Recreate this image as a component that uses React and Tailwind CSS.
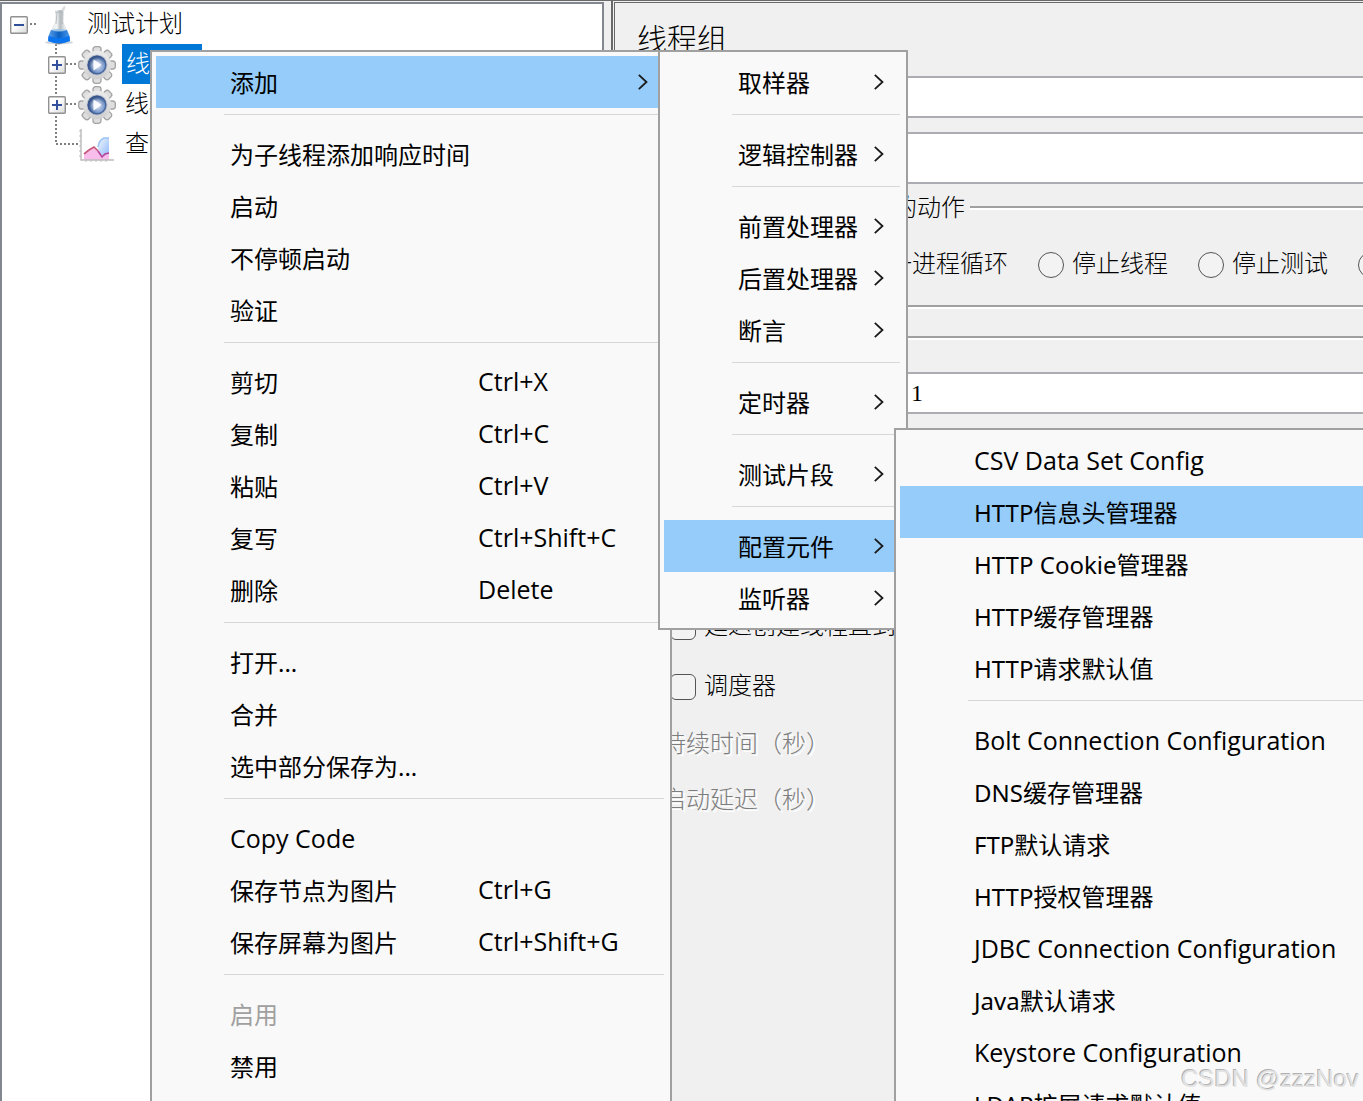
const threadMenu = [
  { label: '添加', submenu: true, active: true },
  null,
  { label: '为子线程添加响应时间' },
  { label: '启动' },
  { label: '不停顿启动' },
  { label: '验证' },
  null,
  { label: '剪切', shortcut: 'Ctrl+X' },
  { label: '复制', shortcut: 'Ctrl+C' },
  { label: '粘贴', shortcut: 'Ctrl+V' },
  { label: '复写', shortcut: 'Ctrl+Shift+C' },
  { label: '删除', shortcut: 'Delete' },
  null,
  { label: '打开...' },
  { label: '合并' },
  { label: '选中部分保存为...' },
  null,
  { label: 'Copy Code', latin: true },
  { label: '保存节点为图片', shortcut: 'Ctrl+G' },
  { label: '保存屏幕为图片', shortcut: 'Ctrl+Shift+G' },
  null,
  { label: '启用', disabled: true },
  { label: '禁用' },
];

const addMenu = [
  { label: '取样器', submenu: true },
  null,
  { label: '逻辑控制器', submenu: true },
  null,
  { label: '前置处理器', submenu: true },
  { label: '后置处理器', submenu: true },
  { label: '断言', submenu: true },
  null,
  { label: '定时器', submenu: true },
  null,
  { label: '测试片段', submenu: true },
  null,
  { label: '配置元件', submenu: true, active: true },
  { label: '监听器', submenu: true },
];

const configMenu = [
  { label: 'CSV Data Set Config', latin: true },
  { label: 'HTTP信息头管理器', active: true },
  { label: 'HTTP Cookie管理器' },
  { label: 'HTTP缓存管理器' },
  { label: 'HTTP请求默认值' },
  null,
  { label: 'Bolt Connection Configuration', latin: true },
  { label: 'DNS缓存管理器' },
  { label: 'FTP默认请求' },
  { label: 'HTTP授权管理器' },
  { label: 'JDBC Connection Configuration', latin: true },
  { label: 'Java默认请求' },
  { label: 'Keystore Configuration', latin: true },
  { label: 'LDAP扩展请求默认值' },
];

const errorActions = ['继续', '启动下一进程循环', '停止线程', '停止测试', '立即停止测试'];

const latinText = "font-['Open_Sans',sans-serif] text-[25px]";

const Menu = ({ items, label, className }) => (
  <div
    role="menu"
    aria-label={label}
    className={`absolute border-2 border-[#a0a0a0] bg-[#f9f9f9] p-1 font-['Noto_Sans','Noto_Sans_CJK_SC',sans-serif] text-2xl text-black ${className}`}
  >
    {items.map((item, index) =>
      item ? (
        <button
          key={index}
          type="button"
          role="menuitem"
          disabled={item.disabled}
          className={`flex h-[52px] w-full items-center pr-[18px] pl-[74px] text-left whitespace-nowrap disabled:text-[#a0a0a0] ${item.active ? 'bg-[#95ccfa]' : ''}`}
        >
          <span className={`pt-0.5 ${item.shortcut ? 'w-[248px]' : 'flex-1'} ${item.latin ? latinText : ''}`}>{item.label}</span>
          {item.shortcut && <span className={latinText}>{item.shortcut}</span>}
          {item.submenu && (
            <svg className="h-4 w-[10px]" viewBox="0 0 10 16" fill="none" stroke="#1a1a1a" strokeWidth="1.8">
              <path d="M0.800 0.800l7.700 7.200-7.700 7.200" />
            </svg>
          )}
        </button>
      ) : (
        <div key={index} role="separator" className="mr-0.5 ml-[68px] h-5 pt-1.5">
          <div className="h-px bg-[#d7d7d7]"></div>
        </div>
      )
    )}
  </div>
);

const Toggle = ({ open, label }) => (
  <button type="button" aria-label={label} className="mt-0.5 size-[18px] shrink-0">
    <svg viewBox="0 0 18 18" className="size-[18px]">
      <defs>
        <linearGradient id="toggle" x1="0" y1="0" x2="1" y2="1">
          <stop offset="0.4" stopColor="#fff" />
          <stop offset="1" stopColor="#d8d8d8" />
        </linearGradient>
      </defs>
      <rect x="0.7" y="0.7" width="16.6" height="16.6" rx="1" fill="url(#toggle)" stroke="#919191" strokeWidth="1.4" />
      <path d={open ? 'M4 9h10' : 'M4 9h10M9 4v10'} stroke="#30509c" strokeWidth="2" />
    </svg>
  </button>
);

const FlaskIcon = () => (
  <svg viewBox="0 0 28 40" className="h-10 w-7 shrink-0">
    <defs>
      <linearGradient id="glass" x1="0" x2="1">
        <stop offset="0" stopColor="#d3d7da" />
        <stop offset="0.4" stopColor="#f4f6f6" />
        <stop offset="0.55" stopColor="#b4bbbe" />
        <stop offset="0.75" stopColor="#e6e9ea" />
        <stop offset="1" stopColor="#c9ced1" />
      </linearGradient>
      <linearGradient id="liquid" x1="0" x2="1">
        <stop offset="0" stopColor="#5fa2ec" />
        <stop offset="0.5" stopColor="#0a5fc0" />
        <stop offset="1" stopColor="#4c9aee" />
      </linearGradient>
    </defs>
    <ellipse cx="14" cy="37.500" rx="14" ry="1.800" fill="#cfd6de" />
    <path d="M16 5l3-4 1.500-0.500-1 5z" fill="#dadddf" />
    <path d="M10 5h9l-0.500 12 5.500 13 1 6q-11 4-22 0l1-6 6-13z" fill="url(#glass)" />
    <path d="M10 7h8M12 7l-1 12M17 7v12" fill="none" stroke="#a6adb1" strokeWidth="0.800" />
    <path d="M6 25h16l3 7v4q-11 4.500-22 0v-4z" fill="url(#liquid)" />
    <path d="M4 31q10 4 20 0l1 5q-11 4.500-22 0z" fill="#0a74ee" />
    <path d="M6 25q8-2 16 0-8 3-16 0z" fill="#9cc2e6" />
    <path d="M9 38.500q5 1.500 10 0z" fill="#2c4f84" />
  </svg>
);

const toothAngles = [0, 45, 90, 135, 180, 225, 270, 315];

const GearIcon = () => (
  <svg viewBox="0 0 38 38" className="size-[38px] shrink-0">
    <defs>
      <linearGradient id="gear" x1="0" y1="0" x2="0" y2="1">
        <stop offset="0" stopColor="#ececec" />
        <stop offset="1" stopColor="#cfcfcf" />
      </linearGradient>
      <linearGradient id="hub" x1="0" y1="0" x2="1" y2="1">
        <stop offset="0" stopColor="#2c456f" />
        <stop offset="0.5" stopColor="#5273ad" />
        <stop offset="1" stopColor="#b5d0f6" />
      </linearGradient>
      <radialGradient id="shine">
        <stop offset="0" stopColor="#eef3fb" />
        <stop offset="0.4" stopColor="#c6d4ea" />
        <stop offset="1" stopColor="#c6d4ea" stopOpacity="0" />
      </radialGradient>
    </defs>
    {toothAngles.map((angle) => (
      <rect key={angle} x="15" y="0.700" width="8" height="10" rx="2.500" fill="#dedede" stroke="#a3a3a3" strokeWidth="1.300" transform={`rotate(${angle} 19 19)`} />
    ))}
    <circle cx="19" cy="19" r="14.200" fill="url(#gear)" />
    <circle cx="19" cy="19" r="10.500" fill="#bfc5cf" />
    <circle cx="19" cy="19" r="9.500" fill="url(#hub)" />
    <circle cx="19" cy="19" r="8.800" fill="none" stroke="#39568c" strokeWidth="1.400" strokeOpacity="0.800" />
    <ellipse cx="19" cy="19" rx="7.500" ry="7.500" fill="url(#shine)" />
    <path d="M15.500 13.500l8 5.500-8 5.500z" fill="#f9fbff" />
  </svg>
);

const ChartIcon = () => (
  <svg viewBox="0 0 36 36" className="size-9 shrink-0">
    <defs>
      <linearGradient id="series" x1="0" y1="0" x2="1" y2="1">
        <stop offset="0" stopColor="#f1f7ff" />
        <stop offset="1" stopColor="#8fb8f7" />
      </linearGradient>
    </defs>
    <path d="M31 10h-5q-6 3-6 12l4 7 7-3z" fill="url(#series)" />
    <path d="M31 10h-5q-5 2-6 9" fill="none" stroke="#9cc3f2" strokeWidth="1.600" />
    <path d="M6 27l5-4 5-3 4 4 4 6 3-3 4-1v6H6z" fill="#f8bdea" />
    <path d="M6 26l5-4 5-3 4 4" fill="none" stroke="#c8557b" strokeWidth="1.700" />
    <path d="M20 23l4 6 3-3 4-1" fill="none" stroke="#b8459c" strokeWidth="1.700" />
    <path d="M3 1v31h33" fill="none" stroke="#bdbdbd" strokeWidth="1.500" />
    <path d="M1 3h2M1 8h2M1 13h2M1 18h2M1 23h2M1 28h2M8 34v-2M13 34v-2M18 34v-2M23 34v-2M28 34v-2" stroke="#bdbdbd" />
  </svg>
);

const TestTree = () => (
  <nav aria-label="测试计划" className="relative mt-px w-[604px] shrink-0 border-2 border-b-0 border-[#828790] bg-white">
    <svg className="absolute top-0 left-0 h-[160px] w-[100px]" fill="none" stroke="#808080" strokeWidth="2" strokeDasharray="2 2">
      <path d="M28 20h8M54 40v100M64 60h12M64 100h12M54 140h22" />
    </svg>
    <ul className="relative">
      <li>
        <div className="flex h-10 items-center pl-2">
          <Toggle open label="折叠 测试计划" />
          <span className="mt-0.5 ml-[17px] flex"><FlaskIcon /></span>
          <span className="ml-3.5">测试计划</span>
        </div>
        <ul>
          <li className="flex h-10 items-center pl-[46px]">
            <Toggle label="展开 线程组" />
            <span className="mt-0.5 ml-3 flex"><GearIcon /></span>
            <span className="ml-1.5 h-10 bg-[#0078d7] px-1 leading-10 text-white">线程组</span>
          </li>
          <li className="flex h-10 items-center pl-[46px]">
            <Toggle label="展开 线程组" />
            <span className="mt-0.5 ml-3 flex"><GearIcon /></span>
            <span className="ml-[9px]">线程组</span>
          </li>
          <li className="flex h-10 items-center pl-[76px]">
            <span className="mt-1 flex"><ChartIcon /></span>
            <span className="ml-[11px]">查看结果树</span>
          </li>
        </ul>
      </li>
    </ul>
  </nav>
);

const Field = ({ id, label, value = '', className = '' }) => (
  <div className="flex items-center">
    <label htmlFor={id} className="w-[242px] shrink-0">{label}</label>
    <input
      id={id}
      type="text"
      defaultValue={value}
      className={`min-w-0 flex-1 border-2 border-r-0 border-[#abadb3] bg-white px-1 outline-none ${className || 'h-[42px]'}`}
    />
  </div>
);

const CheckRow = ({ label }) => (
  <label className="flex h-[60px] items-center gap-2">
    <input type="checkbox" className="size-[26px] appearance-none rounded-md border border-[#555] bg-[#f3f3f3]" />
    <span className="pb-0.5">{label}</span>
  </label>
);

const ThreadGroupPanel = () => (
  <main className="ml-[7px] min-w-0 flex-1 border-l-2 border-[#696969] bg-[#f0f0f0] pt-px pl-px">
    <form className="h-full border-t border-l border-[#696969] bg-[#f0f0f0]">
      <h1 className="flex h-[73px] items-center pl-[22px] text-3xl">线程组</h1>
      <div className="flex flex-col gap-3.5 pl-12">
        <Field id="name" label="名称：" />
        <Field id="comment" label="注释：" className="h-[52px]" />
      </div>

      <fieldset className="ml-[22px] border-b-2 border-[#a0a0a0] shadow-[0_2px_0_white]">
        <legend className="flex h-12 w-full items-center gap-[5px] pl-4">
          <span className="whitespace-nowrap">在取样器错误后要执行的动作</span>
          <span className="h-1 flex-1 border-t-2 border-[#a0a0a0] bg-white"></span>
        </legend>
        <div className="flex h-[73px] gap-[30px] overflow-hidden pt-[17px] pl-[33px]">
          {errorActions.map((action) => (
            <label key={action} className="flex h-[30px] shrink-0 items-center gap-2 whitespace-nowrap">
              <input type="radio" name="error-action" className="mt-0.5 size-[26px] appearance-none rounded-full border border-[#555] bg-[#f3f3f3]" />
              {action}
            </label>
          ))}
        </div>
      </fieldset>

      <fieldset className="ml-[22px]">
        <legend className="flex h-[62px] w-full items-center gap-[5px] pl-4">
          <span>线程属性</span>
          <span className="h-1 flex-1 border-t-2 border-[#a0a0a0] bg-white"></span>
        </legend>
        <div className="mt-[3px] flex flex-col gap-3.5 pl-[26px]">
          <Field id="threads" label="线程数：" value="1" />
          <Field id="ramp" label="Ramp-Up时间（秒）：" value="1" />
          <Field id="loops" label="循环次数" value="1" />
        </div>
        <div className="mt-[71px] pl-[33px]">
          <CheckRow label="延迟创建线程直到需要" />
          <CheckRow label="调度器" />
        </div>
        <div className="pl-[25px] text-[#7d7d7d] [text-shadow:2px_2px_0_white]">
          <p className="h-14 leading-[54px]">持续时间（秒）</p>
          <p className="h-14 leading-[54px]">启动延迟（秒）</p>
        </div>
      </fieldset>
    </form>
  </main>
);

const App = () => (
  <div className="relative flex h-screen overflow-hidden border-t border-[#696969] bg-[#f0f0f0] font-['Liberation_Serif','Noto_Sans_CJK_SC',serif] text-2xl font-light text-black">
    <TestTree />
    <ThreadGroupPanel />

    <div className="font-normal">
      <Menu items={threadMenu} label="线程组" className="top-[49px] -bottom-2 left-[150px] w-[522px]" />
      <Menu items={addMenu} label="添加" className="top-[49px] left-[658px] w-[250px]" />
      <Menu items={configMenu} label="配置元件" className="top-[427px] -right-10 left-[894px]" />
    </div>

    <span className="pointer-events-none absolute right-1 bottom-1.5 font-['Liberation_Sans',sans-serif] text-2xl font-normal text-[#e2e2e2] [text-shadow:-1px_-1px_0_#b0b0b0]">
      CSDN @zzzNov
    </span>
  </div>
);

export default App;
